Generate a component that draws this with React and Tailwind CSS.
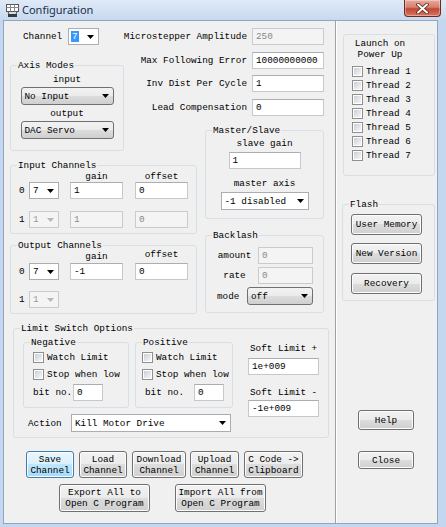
import React from 'react';

const Arrow = ({ color = '#000' }) => (
  <svg width="7" height="4" viewBox="0 0 7 4" className="shrink-0">
    <path d="M0 0h7L3.5 4z" fill={color} />
  </svg>
);

const Group = ({ title, className = '', children }) => (
  <fieldset className={`border border-[#d5dfe5] rounded-[3px] ${className}`}>
    {title && <legend className="ml-[6px] px-[1px]">{title}</legend>}
    {children}
  </fieldset>
);

const Field = ({ value, className = '', disabled = false }) => (
  <div
    className={`h-[17px] border pl-[3px] leading-[15px] whitespace-nowrap overflow-hidden ${
      disabled
        ? 'border-[#cacbcd] bg-[#f4f4f4] text-[#8a8a8a]'
        : 'border-[#c5c8ce] border-t-[#abadb3] bg-white'
    } ${className}`}
  >
    {value}
  </div>
);

const comboStyles = {
  white: 'bg-white border-[#abadb3]',
  button:
    'rounded-[3px] border-[#707070] bg-[image:linear-gradient(#f2f2f2,#ebebeb_50%,#dddddd_50%,#cfcfcf)]',
  disabled: 'bg-[#f4f4f4] border-[#cacbcd] text-[#9a9a9a]',
};

const Combo = ({ value, className = '', kind = 'white', highlight = false }) => (
  <div
    className={`flex items-center justify-between border pl-[2px] pr-[4px] whitespace-nowrap ${comboStyles[kind]} ${className}`}
  >
    <span className={highlight ? 'bg-[#3399ff] text-white px-[1px]' : 'pl-[1px]'}>{value}</span>
    <Arrow color={kind === 'disabled' ? '#b8b8b8' : '#000'} />
  </div>
);

const Btn = ({ children, className = '', focused = false }) => (
  <button
    type="button"
    className={`border rounded-[3px] leading-[11px] text-center shadow-[inset_0_0_0_1px_#fcfcfc] ${
      focused
        ? 'border-[#3c7fb1] bg-[image:linear-gradient(#eaf6fd,#d9f0fc_50%,#bee6fd_50%,#a7d9f5)]'
        : 'border-[#707070] bg-[image:linear-gradient(#f2f2f2,#ebebeb_50%,#dddddd_50%,#cfcfcf)]'
    } ${className}`}
  >
    {children}
  </button>
);

const Check = ({ label, className = '' }) => (
  <div className={`flex items-center h-[14px] ${className}`}>
    <span className="w-[11px] h-[11px] border border-[#8e8f8f] bg-white p-[1px] shrink-0">
      <span className="block w-full h-full bg-[image:linear-gradient(135deg,#cbcfd5,#f6f6f6)]" />
    </span>
    <span className="ml-[3px] whitespace-nowrap">{label}</span>
  </div>
);

const TitleBar = () => (
  <div className="h-[20px] flex items-start bg-[image:linear-gradient(#dfeaf7,#c7d9ef)]">
    <svg width="15" height="15" viewBox="0 0 15 15" className="ml-[5px] mt-[3px] shrink-0">
      <rect x="1.5" y="1.5" width="12" height="7" fill="#fff" stroke="#555" />
      <path d="M1.5 4.5h12M5.5 1.5v7M9.5 1.5v7" stroke="#888" />
      <path d="M3 8.5l1 3h7l1-3" fill="none" stroke="#555" />
      <rect x="3" y="11" width="9" height="3" fill="#3b3b3b" />
    </svg>
    <span className="ml-[2px] mt-[3px] text-[11px] leading-[14px] text-[#1b2e4a] font-['Noto_Sans',sans-serif]">
      Configuration
    </span>
    <div className="ml-auto mr-[5px] w-[37px] h-[17px] border border-t-0 border-[#6b2a20] rounded-b-[4px] flex items-center justify-center bg-[image:linear-gradient(#e8a99c,#d5806f_45%,#c24631_55%,#d87762)] shadow-[inset_0_0_0_1px_rgba(255,255,255,0.35)]">
      <svg width="13" height="11" viewBox="0 0 13 11">
        <path d="M2 1.5l9 8M11 1.5l-9 8" stroke="#5a2018" strokeWidth="3.6" strokeLinecap="round" />
        <path d="M2 1.5l9 8M11 1.5l-9 8" stroke="#fff" strokeWidth="2" strokeLinecap="round" />
      </svg>
    </div>
  </div>
);

const ChannelRow = ({ label, second = false, gain, offset, onlySelect = false }) => (
  <div className="flex items-center h-[17px]">
    <span className="ml-[8px] w-[10px]">{label}</span>
    <Combo value={second ? '1' : '7'} kind={second ? 'disabled' : 'white'} className="w-[30px] h-[17px]" />
    {!onlySelect && (
      <>
        <Field value={gain} disabled={second} className="ml-[11px] w-[53px]" />
        <Field value={offset} disabled={second} className="ml-[12px] w-[53px]" />
      </>
    )}
  </div>
);

const FieldRow = ({ label, value, disabled, className = '' }) => (
  <div className={`-ml-[90px] flex justify-end items-center h-[17px] ${className}`}>
    <span className="mr-[5px] whitespace-nowrap">{label}</span>
    <Field value={value} disabled={disabled} className="w-[72px]" />
  </div>
);

const LeftPane = () => (
  <div className="w-[331px] flex flex-col">
    <div className="flex pl-[6px]">
      <div className="w-[187px] flex flex-col">
        <div className="mt-[7px] h-[17px] flex items-center">
          <span className="ml-[13px] w-[45px]">Channel</span>
          <Combo value="7" highlight className="w-[31px] h-[17px]" />
        </div>
        <Group title="Axis Modes" className="mt-[15px] w-[114px] h-[91px]">
          <div className="flex flex-col items-center">
            <span className="mt-[3px]">input</span>
            <Combo value="No Input" kind="button" className="mt-[2px] w-[93px] h-[18px]" />
            <span className="mt-[3px]">output</span>
            <Combo value="DAC Servo" kind="button" className="mt-[2px] w-[93px] h-[18px]" />
          </div>
        </Group>
        <Group title="Input Channels" className="mt-[9px] w-[187px] h-[74px]">
          <div className="flex h-[11px]">
            <span className="ml-[59px] w-[53px] text-center">gain</span>
            <span className="ml-[12px] w-[53px] text-center">offset</span>
          </div>
          <ChannelRow label="0" gain="1" offset="0" />
          <div className="mt-[12px]">
            <ChannelRow label="1" second gain="1" offset="0" />
          </div>
        </Group>
        <Group title="Output Channels" className="mt-[6px] w-[187px] h-[74px]">
          <div className="flex h-[11px]">
            <span className="ml-[59px] w-[53px] text-center">gain</span>
            <span className="ml-[12px] w-[53px] text-center -mt-[2px]">offset</span>
          </div>
          <div className="mt-[1px]">
            <ChannelRow label="0" gain="-1" offset="0" />
          </div>
          <div className="mt-[11px]">
            <ChannelRow label="1" second onlySelect />
          </div>
        </Group>
      </div>

      <div className="ml-[8px] w-[119px] flex flex-col">
        <FieldRow label="Microstepper Amplitude" value="250" disabled className="mt-[7px]" />
        <FieldRow label="Max Following Error" value="10000000000" className="mt-[7px]" />
        <FieldRow label="Inv Dist Per Cycle" value="1" className="mt-[6px]" />
        <FieldRow label="Lead Compensation" value="0" className="mt-[7px]" />
        <Group title="Master/Slave" className="mt-[9px] w-[119px] h-[94px]">
          <div className="flex flex-col items-center">
            <span className="mt-[2px]">slave gain</span>
            <Field value="1" className="mt-[3px] w-[72px]" />
            <span className="mt-[9px]">master axis</span>
            <Combo value="-1 disabled" className="mt-[3px] w-[88px] h-[18px]" />
          </div>
        </Group>
        <Group title="Backlash" className="mt-[11px] w-[119px] h-[83px]">
          <div className="mt-[6px] flex items-center">
            <span className="ml-[8px] w-[41px] text-center">amount</span>
            <Field value="0" disabled className="ml-[3px] w-[55px]" />
          </div>
          <div className="mt-[3px] flex items-center">
            <span className="ml-[8px] w-[41px] text-center">rate</span>
            <Field value="0" disabled className="ml-[3px] w-[55px]" />
          </div>
          <div className="mt-[3px] flex items-center">
            <span className="ml-[11px] w-[30px]">mode</span>
            <Combo value="off" kind="button" className="w-[66px] h-[18px]" />
          </div>
        </Group>
      </div>
    </div>

    <Group title="Limit Switch Options" className="ml-[9px] mt-[9px] w-[316px] h-[115px]">
      <div className="flex">
        <div className="flex flex-col">
          <div className="flex">
            <Group title="Negative" className="ml-[9px] mt-[3px] w-[106px] h-[71px]">
              <Check label="Watch Limit" className="ml-[9px] mt-[2px]" />
              <Check label="Stop when low" className="ml-[9px] mt-[3px]" />
              <div className="mt-[3px] flex items-center">
                <span className="ml-[9px] w-[40px]">bit no.</span>
                <Field value="0" className="w-[30px]" />
              </div>
            </Group>
            <Group title="Positive" className="ml-[6px] mt-[3px] w-[98px] h-[71px]">
              <Check label="Watch Limit" className="ml-[6px] mt-[2px]" />
              <Check label="Stop when low" className="ml-[6px] mt-[3px]" />
              <div className="mt-[3px] flex items-center">
                <span className="ml-[9px] w-[49px]">bit no.</span>
                <Field value="0" className="w-[30px]" />
              </div>
            </Group>
          </div>
          <div className="mt-[6px] flex items-center">
            <span className="ml-[14px] w-[43px]">Action</span>
            <Combo value="Kill Motor Drive" className="w-[160px] h-[18px]" />
          </div>
        </div>
        <div className="ml-[15px] flex flex-col">
          <span className="mt-[9px] pl-[2px]">Soft Limit +</span>
          <Field value="1e+009" className="mt-[4px] w-[71px]" />
          <span className="mt-[12px] pl-[2px]">Soft Limit -</span>
          <Field value="-1e+009" className="mt-[2px] w-[71px]" />
        </div>
      </div>
    </Group>

    <div className="mt-[13px] ml-[22px] flex">
      <Btn focused className="w-[48px] h-[27px]">Save<br />Channel</Btn>
      <Btn className="ml-[5px] w-[48px] h-[27px]">Load<br />Channel</Btn>
      <Btn className="ml-[5px] w-[54px] h-[27px]">Download<br />Channel</Btn>
      <Btn className="ml-[4px] w-[49px] h-[27px]">Upload<br />Channel</Btn>
      <Btn className="ml-[5px] w-[59px] h-[27px]">C Code -&gt;<br />Clipboard</Btn>
    </div>
    <div className="mt-[6px] ml-[55px] flex">
      <Btn className="w-[91px] h-[28px]">Export All to<br />Open C Program</Btn>
      <Btn className="ml-[25px] w-[91px] h-[28px]">Import All from<br />Open C Program</Btn>
    </div>
  </div>
);

const RightPane = () => (
  <div className="flex-1 flex flex-col">
    <fieldset className="ml-[6px] mt-[13px] w-[92px] h-[142px] border border-[#d5dfe5] rounded-[3px]">
      <div className="mt-[3px] ml-[8px] w-[56px] text-center">
        Launch on<br />Power Up
      </div>
      <div className="mt-[4px] ml-[8px]">
        {[1, 2, 3, 4, 5, 6, 7].map((n) => (
          <Check key={n} label={`Thread ${n}`} />
        ))}
      </div>
    </fieldset>
    <Group title="Flash" className="ml-[5px] mt-[23px] w-[93px] h-[102px]">
      <Btn className="ml-[8px] mt-[4px] w-[71px] h-[21px]">User Memory</Btn>
      <Btn className="ml-[8px] mt-[8px] w-[71px] h-[21px]">New Version</Btn>
      <Btn className="ml-[8px] mt-[9px] w-[71px] h-[21px]">Recovery</Btn>
    </Group>
    <Btn className="ml-[21px] mt-[109px] w-[56px] h-[20px]">Help</Btn>
    <Btn className="ml-[21px] mt-[21px] w-[56px] h-[18px]">Close</Btn>
  </div>
);

export default function App() {
  return (
    <div className="w-[446px] h-[527px] flex flex-col bg-[#c4d7ee] font-['Liberation_Mono',monospace] text-[9.33px] leading-[11px] text-black overflow-hidden">
      <TitleBar />
      <div className="flex-1 ml-[3px] mr-[8px] mb-[3px] border border-[#8fa6c2] bg-[#f0f0f0] flex">
        <LeftPane />
        <div className="w-[2px] border-l border-r border-l-[#a0a0a0] border-r-white" />
        <RightPane />
      </div>
    </div>
  );
}
